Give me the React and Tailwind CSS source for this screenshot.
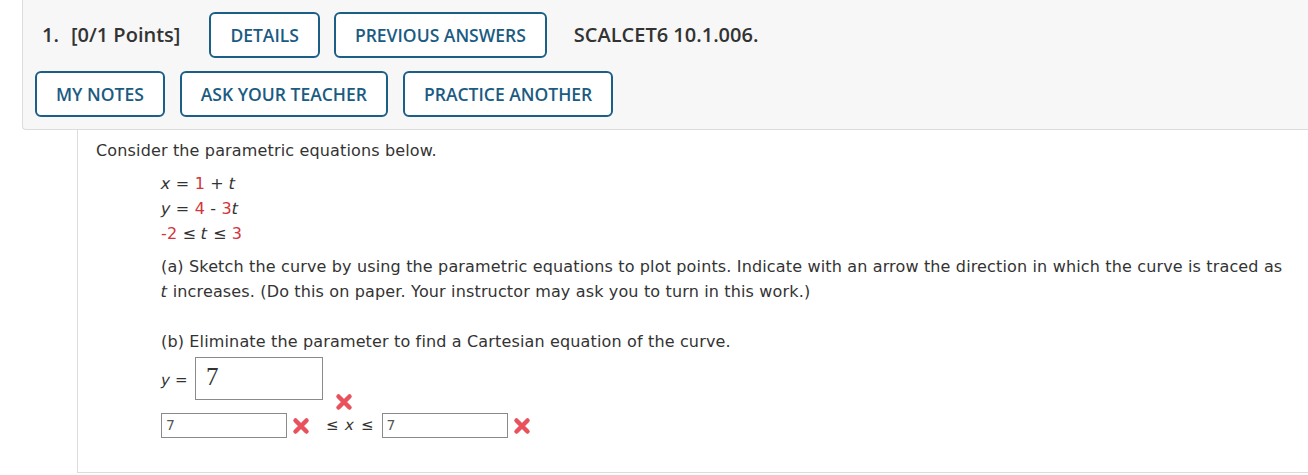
import React from 'react';

const headFont = { fontFamily: '"Open Sans", "Liberation Sans", sans-serif' };

function ActionButton({ children }) {
  return (
    <button
      type="button"
      className="flex h-[46px] items-center rounded-[6px] border-2 border-[#1c5f86] bg-white px-[19px] text-[17.5px] font-semibold tracking-[0px] text-[#1b5b82]"
    >
      {children}
    </button>
  );
}

function WrongMark() {
  return (
    <svg width="18" height="18" viewBox="0 0 18 18" className="shrink-0">
      <path d="M3.5 3.5 L14.5 14.5 M14.5 3.5 L3.5 14.5" stroke="#e9525d" strokeWidth="4.5" strokeLinecap="round" />
    </svg>
  );
}

const Red = ({ children }) => <span className="text-[#d2353c]">{children}</span>;
// the sandbox's sans face has no oblique cut, so slant the variable letters by hand
const V = ({ children }) => <span className="inline-block -skew-x-12">{children}</span>;

export default function App() {
  return (
    <div className="min-h-[475px] bg-white text-[#333]">
      <div className="ml-[22px] -mt-px rounded-bl-[4px] border border-r-0 border-[#dcdcdc] bg-[#f7f7f7] px-3 pt-[12px] pb-[12px]" style={headFont}>
        <div className="flex items-center">
          <div className="ml-[7px] mr-[29px] flex text-[20px] font-semibold text-[#333]">
            <span>1.</span>
            <span className="ml-[12px]">[0/1 Points]</span>
          </div>
          <ActionButton>DETAILS</ActionButton>
          <div className="ml-[14px]">
            <ActionButton>PREVIOUS ANSWERS</ActionButton>
          </div>
          <div className="ml-[27px] text-[20px] font-semibold text-[#333]">SCALCET6 10.1.006.</div>
        </div>
        <div className="mt-[13px] flex gap-[15px]">
          <ActionButton>MY NOTES</ActionButton>
          <ActionButton>ASK YOUR TEACHER</ActionButton>
          <ActionButton>PRACTICE ANOTHER</ActionButton>
        </div>
      </div>

      <div
        className="ml-[77px] h-[343px] border-b border-l border-[#dcdcdc] pt-[8px] pl-[18px] pr-[14px] text-[16px] leading-[25px] tracking-[0.15px] text-[#333]"
        style={{ fontFamily: '"DejaVu Sans", Verdana, sans-serif' }}
      >
        <div>Consider the parametric equations below.</div>
        <div className="ml-[65px] mt-[8px]">
          <div><V>x</V> = <Red>1</Red> + <V>t</V></div>
          <div><V>y</V> = <Red>4</Red> - <Red>3</Red><V>t</V></div>
          <div><Red>-2</Red> ≤ <V>t</V> ≤ <Red>3</Red></div>

          <p className="mt-[8px]">
            (a) Sketch the curve by using the parametric equations to plot points. Indicate with an arrow the direction in which the curve is traced as <V>t</V> increases. (Do this on paper. Your instructor may ask you to turn in this work.)
          </p>

          <p className="mt-[25px]">(b) Eliminate the parameter to find a Cartesian equation of the curve.</p>

          <div className="mt-[3px] flex items-start">
            <div className="mt-[11px] w-[34px] text-[15px]"><V>y</V> =</div>
            <div
              className="flex h-[43px] w-[128px] items-start border border-[#8a8a8a] px-[10px] pt-[4px] text-[25px] leading-[30px] text-[#333]"
              style={{ fontFamily: '"Liberation Serif", "DejaVu Serif", serif' }}
            >
              7
            </div>
            <div className="ml-[12px] mt-[36px]"><WrongMark /></div>
          </div>

          <div className="mt-[2px] flex items-center">
            <div className="flex h-[25px] w-[126px] items-center border border-[#8a8a8a] px-[4px] text-[14px] text-[#555]">7</div>
            <div className="ml-[5px]"><WrongMark /></div>
            <div className="ml-[16px] mr-[7px] text-[15px] tracking-[1px]">≤ <V>x</V> ≤</div>
            <div className="flex h-[25px] w-[126px] items-center border border-[#8a8a8a] px-[4px] text-[14px] text-[#555]">7</div>
            <div className="ml-[5px]"><WrongMark /></div>
          </div>
        </div>
      </div>
    </div>
  );
}
